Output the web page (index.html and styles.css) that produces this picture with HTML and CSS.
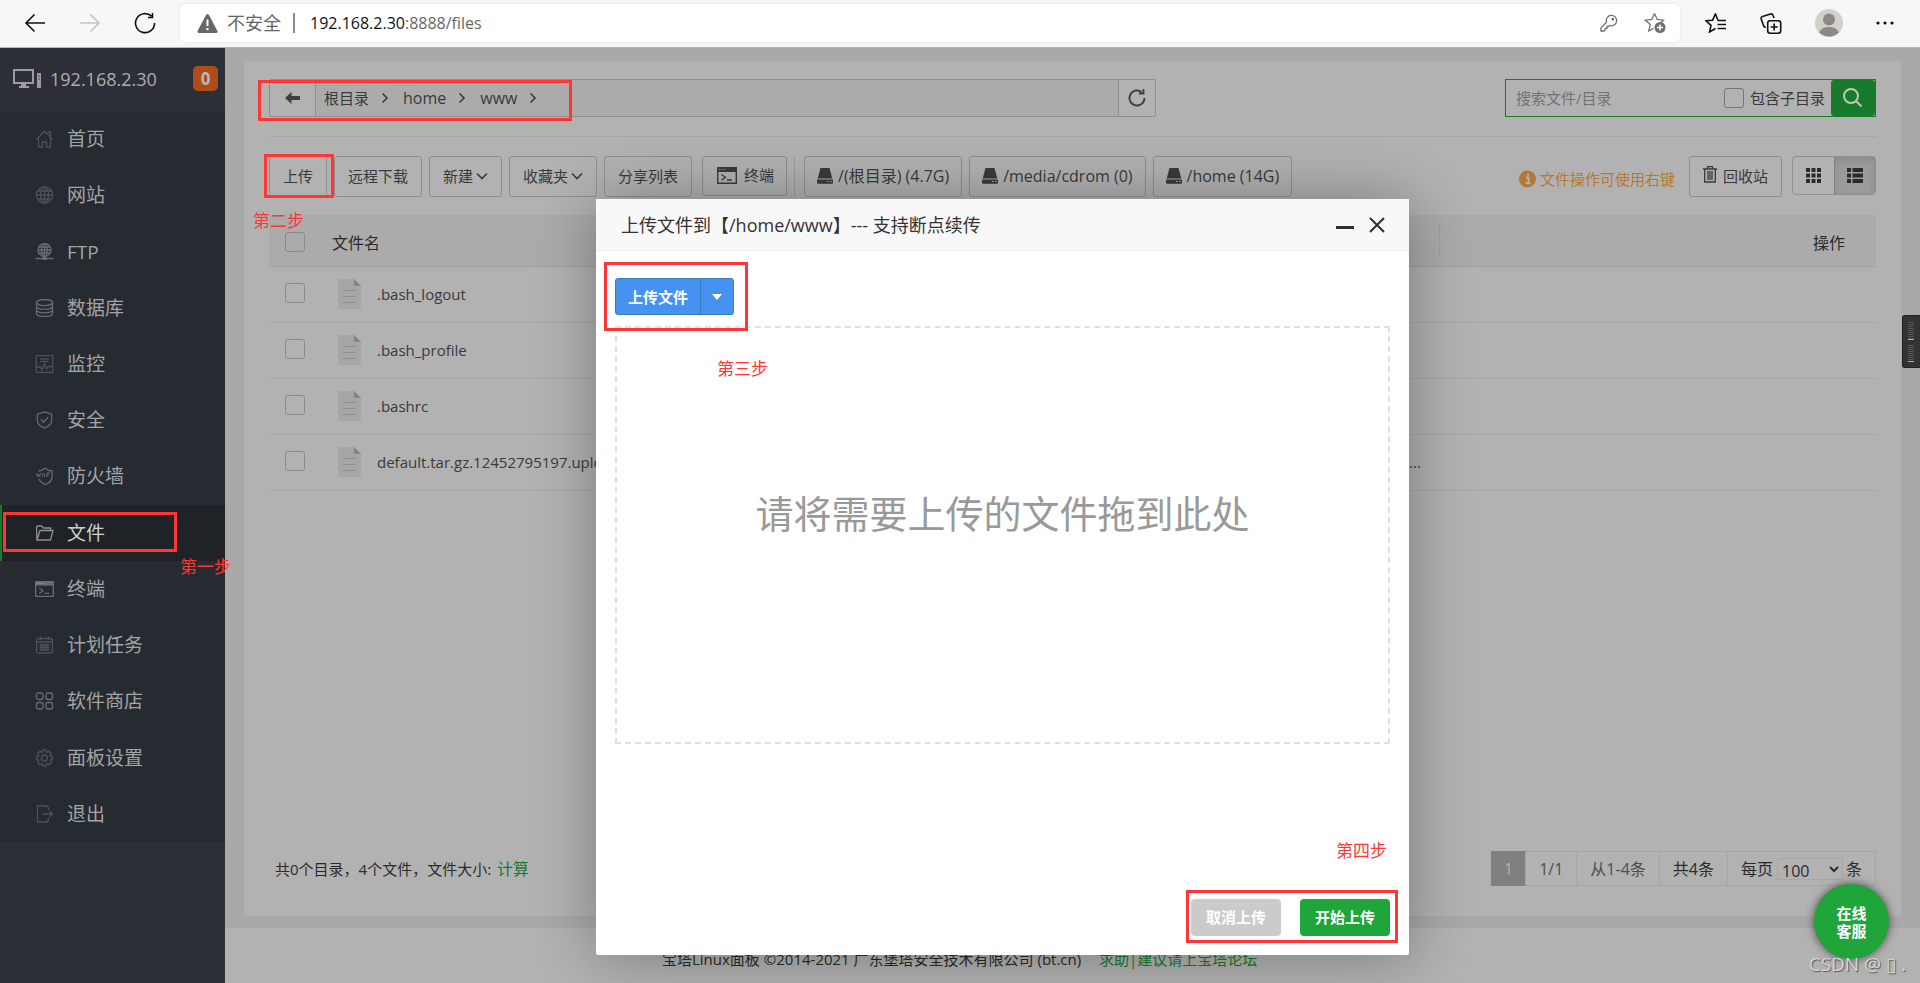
FILE: index.html
```html
<!DOCTYPE html>
<html lang="zh-CN">
<head>
<meta charset="utf-8">
<title>文件 - 宝塔Linux面板</title>
<link rel="stylesheet" href="styles.css">
</head>
<body>
<svg class="sprite" aria-hidden="true">
  <symbol id="chev" viewBox="0 0 12 12"><path d="M1 3.500 6 8.500 11 3.500" fill="none" stroke="currentColor" stroke-width="1.600"/></symbol>
  <symbol id="sep" viewBox="0 0 8 12"><path d="M1.500 1.500 6 6 1.500 10.500" fill="none" stroke="currentColor" stroke-width="1.600"/></symbol>
  <symbol id="disk" viewBox="0 0 16 16"><path d="M3.500 0h9l2.800 10.500H.7z"/><path d="M0 11.500h16v3a1.200 1.200 0 0 1-1.200 1.200H1.200A1.200 1.200 0 0 1 0 14.500z"/><path d="M10 13.500h1.600M13 13.500h1.600" stroke="#b2b2b2" stroke-width="1.200"/></symbol>
  <symbol id="file" viewBox="0 0 23 30"><path d="M1 0h15l7 7v22a1 1 0 0 1-1 1H1a1 1 0 0 1-1-1V1a1 1 0 0 1 1-1z" fill="#a6a6a6"/><path d="M16 0l7 7h-7z" fill="#858585"/><path d="M5 11.500h13M5 17.500h13M5 23.500h13" stroke="#8e8e8e"/></symbol>
  <symbol id="term" viewBox="0 0 20 17"><path d="M.7.7h18.600v15.600H.7z" fill="none" stroke="currentColor" stroke-width="1.400"/><path d="M0 0h20v5H0z" fill="currentColor"/><path d="M2 2.500h1.200M4.500 2.500h1.200M7 2.500h1.200" stroke="#999"/><path d="M4.500 7.500l4 2.800-4 2.800M10 13h5" fill="none" stroke="currentColor" stroke-width="1.300"/></symbol>
</svg>

<header class="browser">
  <div class="nav">
    <button aria-label="后退"><svg width="22" height="20" viewBox="0 0 22 20"><path d="M21 10H2M10.500 1.500 2 10l8.500 8.500"/></svg></button>
    <button aria-label="前进" class="off"><svg width="22" height="20" viewBox="0 0 22 20"><path d="M1 10h19M11.500 1.500 20 10l-8.500 8.500"/></svg></button>
    <button aria-label="刷新"><svg width="22" height="22" viewBox="0 0 22 22"><path d="M20.500 11A9.500 9.500 0 1 1 17.500 4.200M18.500 1v4.500H14"/></svg></button>
  </div>
  <div class="address">
    <svg width="21" height="19" viewBox="0 0 21 19"><path d="M9.200.8a1.500 1.500 0 0 1 2.600 0l8.500 16A1.400 1.400 0 0 1 19 19H2A1.400 1.400 0 0 1 .7 16.800z" fill="#666"/><path d="M10.500 5.500v6.500M10.500 14v2.200" stroke="#fff" stroke-width="2"/></svg>
    <span class="insecure">不安全</span>
    <i class="bar"></i>
    <span class="url"><b>192.168.2.30</b>:8888/files</span>
    <svg class="key" width="18" height="18" viewBox="0 0 18 18"><path d="M6.500 8.200a5.200 5.200 0 1 1 3.300 3.300L8.500 12.500H7v1.800H5.200v1.500L4 17H1v-3z"/><circle cx="12.800" cy="5.200" r=".8"/></svg>
    <svg class="key" width="22" height="22" viewBox="0 0 22 22"><path d="M10.500 1.500l2.700 6 6.300.7-4 3.600M10.500 1.500l-2.700 6-6.500.7 4.900 4.400-1.400 6.300 4.700-2.700"/><circle cx="16" cy="15.500" r="5.500" fill="#6f6f6f" stroke="none"/><path d="M16 12.500v6M13 15.500h6" stroke="#fff" stroke-width="1.500"/></svg>
  </div>
  <div class="tools">
    <button aria-label="收藏夹"><svg width="22" height="20" viewBox="0 0 22 20"><path d="M13 7.200 10.400 1 7.600 7.200 1 7.800l5 4.500L4.500 19l6-3.500M12.500 7.500H21M12.500 11.500H21M12.500 15.500H21"/></svg></button>
    <button aria-label="集锦"><svg width="22" height="21" viewBox="0 0 22 21"><rect x="7.700" y="7.700" width="13" height="12.500" rx="2.500"/><path d="M14.200 10.500v7M10.700 14h7M14 5l-1-2.700A2 2 0 0 0 10.500 1L2.500 3.500A2 2 0 0 0 1.200 6l2.500 7a3 3 0 0 0 2 1.500"/></svg></button>
    <button aria-label="个人"><svg width="28" height="28" viewBox="0 0 28 28"><circle cx="14" cy="14" r="14" fill="#d3d0cc" stroke="none"/><circle cx="14" cy="10.500" r="6" fill="#8d8884" stroke="none"/><path d="M4.200 23.500c2-4.500 6-5.500 9.800-5.500s7.800 1 9.800 5.500A14 14 0 0 1 14 27.500a14 14 0 0 1-9.800-4z" fill="#8d8884" stroke="none"/></svg></button>
    <button aria-label="更多"><svg width="18" height="4" viewBox="0 0 18 4"><g fill="#111" stroke="none"><circle cx="2" cy="2" r="1.600"/><circle cx="9" cy="2" r="1.600"/><circle cx="16" cy="2" r="1.600"/></g></svg></button>
  </div>
</header>

<div class="app">
  <aside class="sidebar">
    <div class="host">
      <svg width="29" height="20" viewBox="0 0 29 20"><path d="M1 1h19v13H1z" fill="none" stroke="#9b9c9e" stroke-width="2"/><path d="M8 15h5v2h3v2H6v-2h2z" fill="#9b9c9e"/><path d="M24 4h4v15h-4z" fill="#9b9c9e"/><path d="M25 7h2M25 10h2" stroke="#555"/></svg>
      <span>192.168.2.30</span>
      <em>0</em>
    </div>
    <nav class="menu">
      <a href="#"><svg viewBox="0 0 18 18"><path d="M.7 9.500 9 1.200l8.300 8.300M3 8v9h4v-5h4v5h4V8M12 2h3v4"/></svg>首页</a>
      <a href="#"><svg viewBox="0 0 18 18"><circle cx="9" cy="9" r="8.200"/><ellipse cx="9" cy="9" rx="4" ry="8.200"/><path d="M9 1v16M1 9h16M2.200 5h13.600M2.200 13h13.600"/></svg>网站</a>
      <a href="#" class="lit"><svg viewBox="0 0 18 18"><circle cx="9" cy="7" r="6.500"/><ellipse cx="9" cy="7" rx="3" ry="6.500"/><path d="M9 0v16M2.500 7h13M3.500 4h11M3.500 10h11M0 15.500h18" /><path d="M7 15.500h4" stroke-width="3"/></svg>FTP</a>
      <a href="#" class="lit"><svg viewBox="0 0 18 18"><ellipse cx="9" cy="3.600" rx="8" ry="3"/><path d="M1 3.600v10.800c0 4 16 4 16 0V3.600M1 7.200c0 4 16 4 16 0M1 10.800c0 4 16 4 16 0"/></svg>数据库</a>
      <a href="#"><svg viewBox="0 0 18 18"><path d="M.7.7h16.600v16.600H.7zM5 4h8M5 6.500h8M1 12h4l1.500 3L9 9l2 5 1.500-2.500H17"/></svg>监控</a>
      <a href="#" class="lit"><svg viewBox="0 0 18 20"><path d="M9 1 17 3.500V10c0 5-4 7.500-8 9-4-1.500-8-4-8-9V3.500zM5 9l3 3.500L13 7"/></svg>安全</a>
      <a href="#" class="lit"><svg viewBox="0 0 18 18"><path d="M3 4c2.500 0 4-.8 6.500-2.800C12 3.200 13.500 4 16.500 4v6c0 3.500-3 6-6.500 7.500-3-1.200-5.500-3-6.500-5.500"/><path d="M1 6l1 4 1-3 1 3 1-4M6.500 10 8 6l1.500 4M11.500 10V6h3M11.500 8h2" stroke-width="1"/></svg>防火墙</a>
      <a href="#" class="on"><svg viewBox="0 0 18 18"><path d="M1.500 16 1 3.500A1.500 1.500 0 0 1 2.500 2H6l2 2h7v2.500M1.500 16 4.500 6.500h13L15 16z"/></svg>文件</a>
      <a href="#" class="lit"><svg viewBox="0 0 20 17"><use href="#term"/></svg>终端</a>
      <a href="#"><svg viewBox="0 0 18 18"><rect x="1" y="2.500" width="16" height="14.500" rx="2"/><path d="M1 6h16M5 .5v4M13 .5v4M4 9h10M4 11.500h10M4 14h10M6 8v7M9 8v7M12 8v7"/></svg>计划任务</a>
      <a href="#" class="lit"><svg viewBox="0 0 18 18"><rect x="1" y="1" width="6.500" height="6.500" rx="2"/><rect x="10.500" y="1" width="6.500" height="6.500" rx="2"/><rect x="1" y="10.500" width="6.500" height="6.500" rx="2"/><rect x="10.500" y="10.500" width="6.500" height="6.500" rx="2"/></svg>软件商店</a>
      <a href="#"><svg viewBox="0 0 18 18"><path d="M7.500 1h3l.6 2.300 2.400-1 2.200 2.200-1 2.400 2.300.6v3l-2.300.6 1 2.400-2.200 2.200-2.400-1-.6 2.300h-3l-.6-2.300-2.400 1-2.200-2.200 1-2.400L1 10.500v-3l2.300-.6-1-2.400 2.200-2.200 2.400 1z"/><circle cx="9" cy="9" r="3"/></svg>面板设置</a>
      <a href="#"><svg viewBox="0 0 18 18"><path d="M13 5V3l-1.500-2H2v16h9.500l1.500-2v-2M7 9h10M14 6l3 3-3 3"/></svg>退出</a>
    </nav>
  </aside>

  <div class="content">
    <main class="panel">
      <div class="top">
        <div class="path">
          <button class="back" aria-label="返回上级"><svg width="15" height="12" viewBox="0 0 15 12"><path d="M0 6 6.500 0v4H15v4H6.500v4z"/></svg></button>
          <div class="crumbs"><a href="#">根目录</a><svg><use href="#sep"/></svg><a href="#" class="en">home</a><svg><use href="#sep"/></svg><a href="#" class="en">www</a><svg><use href="#sep"/></svg></div>
          <button class="refresh" aria-label="刷新目录"><svg width="18" height="18" viewBox="0 0 18 18"><path d="M16.500 9A7.500 7.500 0 1 1 13.500 3M11 4.500h4.500V0" fill="none" stroke="currentColor" stroke-width="1.800"/></svg></button>
        </div>
        <form class="search">
          <input type="text" placeholder="搜索文件/目录" aria-label="搜索文件/目录">
          <input type="checkbox" id="sub"><label for="sub">包含子目录</label>
          <button type="button" aria-label="搜索"><svg width="20" height="20" viewBox="0 0 20 20"><circle cx="8" cy="8" r="7"/><path d="M13 13l5.500 5.500"/></svg></button>
        </form>
      </div>

      <div class="bar-row">
        <button class="btn">上传</button>
        <button class="btn">远程下载</button>
        <button class="btn">新建<svg class="down"><use href="#chev"/></svg></button>
        <button class="btn">收藏夹<svg class="down"><use href="#chev"/></svg></button>
        <button class="btn">分享列表</button>
        <button class="btn wide"><svg width="20" height="17"><use href="#term"/></svg>终端</button>
        <i class="rule"></i>
        <button class="btn disk"><svg><use href="#disk"/></svg>/(根目录) (4.7G)</button>
        <button class="btn disk"><svg><use href="#disk"/></svg>/media/cdrom (0)</button>
        <button class="btn disk"><svg><use href="#disk"/></svg>/home (14G)</button>
        <span class="tip"><svg width="17" height="18" viewBox="0 0 17 18"><circle cx="8.500" cy="9" r="8.500" fill="#b27a30"/><path d="M7 7.500h2.500V13M6.500 13.200h5M9 3.500v2.200" fill="none" stroke="#b2b2b2" stroke-width="2"/></svg>文件操作可使用右键</span>
        <button class="btn bin"><svg width="14" height="17" viewBox="0 0 14 17"><path d="M0 3h14M4.500 2.500V.7h5v1.800M1.700 3v13h10.600V3M5 5v9M7 5v9M9 5v9" fill="none" stroke="currentColor" stroke-width="1.300"/></svg>回收站</button>
        <div class="toggle">
          <button aria-label="图标视图"><svg width="15" height="15" viewBox="0 0 15 15"><path d="M0 0h4v4H0zM5.500 0h4v4h-4zM11 0h4v4h-4zM0 5.500h4v4H0zM5.500 5.500h4v4h-4zM11 5.500h4v4h-4zM0 11h4v4H0zM5.500 11h4v4h-4zM11 11h4v4h-4z"/></svg></button>
          <button aria-label="列表视图" class="on"><svg width="16" height="15" viewBox="0 0 16 15"><path d="M0 0h4v4H0zM5.500 0H16v4H5.500zM0 5.500h4v4H0zM5.500 5.500H16v4H5.500zM0 11h4v4H0zM5.500 11H16v4H5.500z"/></svg></button>
        </div>
      </div>

      <table class="files">
        <colgroup><col class="c1"><col class="c2"><col class="c3"><col></colgroup>
        <thead><tr><th><input type="checkbox" aria-label="全选"></th><th>文件名</th><th class="edge"></th><th class="act">操作</th></tr></thead>
        <tbody>
          <tr><td><input type="checkbox" aria-label="选择"></td><td><span class="name"><svg><use href="#file"/></svg>.bash_logout</span></td><td></td><td></td></tr>
          <tr><td><input type="checkbox" aria-label="选择"></td><td><span class="name"><svg><use href="#file"/></svg>.bash_profile</span></td><td></td><td></td></tr>
          <tr><td><input type="checkbox" aria-label="选择"></td><td><span class="name"><svg><use href="#file"/></svg>.bashrc</span></td><td></td><td></td></tr>
          <tr><td><input type="checkbox" aria-label="选择"></td><td><span class="name"><svg><use href="#file"/></svg>default.tar.gz.12452795197.upload</span></td><td class="note">续...</td><td></td></tr>
        </tbody>
      </table>

      <div class="summary">
        <span>共0个目录，4个文件，文件大小: <a href="#">计算</a></span>
        <div class="pages">
          <span class="cur">1</span><span>1/1</span><span>从1-4条</span><span class="dark">共4条</span>
          <span class="dark"><label for="per">每页</label><select id="per"><option>100</option></select>条</span>
        </div>
      </div>
    </main>
    <footer class="foot">宝塔Linux面板 ©2014-2021 广东堡塔安全技术有限公司 (bt.cn) <a href="#">求助|建议请上宝塔论坛</a></footer>
  </div>
</div>

<section class="modal" role="dialog" aria-labelledby="mt">
  <header>
    <h2 id="mt">上传文件到【/home/www】--- 支持断点续传</h2>
    <button aria-label="最小化"><svg width="18" height="18" viewBox="0 0 18 18"><path d="M0 11.500h18" stroke-width="3"/></svg></button>
    <button aria-label="关闭"><svg width="16" height="16" viewBox="0 0 16 16"><path d="M1 1l14 14M15 1 1 15" stroke-width="2"/></svg></button>
  </header>
  <div class="split"><button>上传文件</button><button aria-label="更多上传方式"><svg width="10" height="6" viewBox="0 0 10 6"><path d="M0 0h10L5 6z" fill="#fff"/></svg></button></div>
  <div class="drop">请将需要上传的文件拖到此处</div>
  <div class="actions"><button class="cancel">取消上传</button><button class="start">开始上传</button></div>
</section>

<div class="meter">
  <div class="m1"></div>
  <div class="m2"></div>
</div>
<button class="chat">在线<br>客服</button>

<div class="box b1"></div><div class="box b2"></div><div class="box b3"></div><div class="box b4"></div><div class="box b5"></div>
<span class="step s1">第一步</span><span class="step s2">第二步</span><span class="step s3">第三步</span><span class="step s4">第四步</span>
<span class="mark">CSDN @ ▯ .</span>
</body>
</html>
```
FILE: styles.css
```css
* { box-sizing: border-box; }
body {
  margin: 0;
  min-height: 100vh;
  display: flex;
  flex-direction: column;
  position: relative;
  overflow: hidden;
  font: 15px/20px "Open Sans", "Noto Sans CJK SC", sans-serif;
  color: #3a3a3a;
  background: #a9a9a9;
}
button, input, select { font: inherit; color: inherit; margin: 0; }
button { padding: 0; border: 0; background: none; display: inline-flex; align-items: center; justify-content: center; white-space: nowrap; }
a { color: inherit; text-decoration: none; }
svg { flex: none; display: block; }
.sprite { position: absolute; width: 0; height: 0; }

/* browser bar */
.browser { height: 48px; display: flex; align-items: center; background: #f7f7f7; border-bottom: 1px solid #b5b5b5; padding-bottom: 1px; }
.browser button svg { fill: none; stroke: #111; stroke-width: 1.6; }
.nav { display: flex; width: 180px; padding-left: 24px; gap: 33px; }
.nav .off { opacity: .22; }
.address { flex: 1; height: 38px; display: flex; align-items: center; padding: 0 14px 0 17px; background: #fff; border-radius: 5px; box-shadow: 0 0 3px #e0e0e0; font-size: 16px; color: #666; }
.insecure { margin-left: 9px; font-size: 18px; }
.bar { width: 2px; height: 20px; margin: 0 15px 0 12px; background: #8a8a8a; }
.url { flex: 1; }
.url b { font-weight: 400; color: #111; }
.key { fill: none; stroke: #707070; stroke-width: 1.3; margin-left: 26px; }
.tools { display: flex; align-items: center; width: 240px; padding-left: 25px; gap: 33px; }

.app { flex: 1; display: flex; }

/* sidebar */
.sidebar { width: 225px; background: #2c2f38; color: #a2a4a6; }
.host { height: 63px; display: flex; align-items: center; padding: 0 7px 2px 13px; gap: 8px; font-size: 18px; color: #acadae; }
.host span { flex: 1; }
.host em { width: 25px; height: 25px; border-radius: 5px; background: #b04c18; color: #b9b9b9; font: 700 17px/25px "Open Sans", sans-serif; text-align: center; }
.menu { display: grid; grid-auto-rows: 1fr; min-height: 731px; background: #262a31; border-left: 2px solid #2b2c2f; }
.menu a { display: flex; align-items: center; gap: 13px; padding-left: 33px; font-size: 19px; }
.menu svg { width: 19px; height: 18px; fill: none; stroke: #4e5256; stroke-width: 1.3; color: #4e5256; }
.menu .lit svg { stroke: #696c6f; color: #696c6f; }
.menu use { stroke: none; }
.menu .on { margin-left: -2px; border-left: 2px solid #187a2b; background: #1f2226; color: #cfcfcf; }
.menu .on svg { stroke: #8f9193; }

/* content */
.content { flex: 1; display: flex; flex-direction: column; min-width: 0; }
.panel { flex: 1; display: flex; flex-direction: column; margin: 13px 19px 12px; padding: 18px 25px 30px; background: #b2b2b2; }
.top { display: flex; justify-content: space-between; padding-bottom: 19px; border-bottom: 1px solid #a6a6a6; }
.path { display: flex; width: 887px; height: 38px; border: 1px solid #8f8f8f; border-radius: 2px; }
.back { width: 46px; border-right: 1px solid #8f8f8f; }
.back svg { fill: #3d3d3d; }
.refresh { width: 37px; border-left: 1px solid #8f8f8f; }
.crumbs { flex: 1; display: flex; align-items: center; gap: 12px; padding-left: 8px; background: #ababab; }
.crumbs svg { width: 8px; height: 12px; margin-right: 2px; }
.en { font-size: 16px; }
.search { display: flex; align-items: center; width: 371px; height: 38px; border: 1px solid #187a2b; }
.search input[type=text] { flex: 1; min-width: 0; height: 36px; padding: 0 10px; border: 0; background: none; outline: 0; }
.search input::placeholder { color: #727272; opacity: 1; }
.search label { margin: 0 6px; }
.search input[type=checkbox] { border-color: #757575; }
.search button { width: 44px; height: 36px; border-radius: 3px; background: #187a2b; }
.search button svg { fill: none; stroke: #b9c9bc; stroke-width: 2; }
input[type=checkbox] { appearance: none; display: block; width: 20px; height: 20px; border: 1px solid #8a8a8a; border-radius: 3px; }

.bar-row { display: flex; align-items: flex-start; gap: 7px; padding: 19px 0 18px; }
.btn { height: 41px; padding: 0 13px 2px; border: 1px solid #8f8f8f; border-radius: 3px; }
.btn .down { width: 12px; height: 12px; margin-left: 3px; }
.wide { height: 40px; padding: 0 12px 2px 14px; margin-left: 3px; gap: 7px; }
.rule { width: 1px; height: 41px; margin-right: 2px; background: #9c9c9c; }
.disk { gap: 5px; padding: 0 12px 2px; font-size: 16px; }
.disk svg { width: 16px; height: 16px; fill: #3a3a3a; }
.tip { display: flex; align-items: center; gap: 4px; height: 41px; padding-top: 5px; margin-left: auto; color: #b27a30; }
.bin { gap: 6px; margin-left: 7px; }
.bin svg { margin-bottom: 2px; }
.toggle { display: flex; height: 39px; margin-left: 3px; border: 1px solid #8f8f8f; border-radius: 4px; }
.toggle button { width: 41px; }
.toggle svg { fill: #2b2b2b; }
.toggle .on { background: #9b9b9b; border-left: 1px solid #828282; box-shadow: inset 0 3px 6px #8a8a8a; }

.files { width: 100%; table-layout: fixed; border-collapse: collapse; }
.files .c1 { width: 55px; }
.files .c2 { width: 1070px; }
.files .c3 { width: 46px; }
.files th { height: 51px; padding: 6px 8px 0; background: #ababab; border-bottom: 1px solid #a0a0a0; font-weight: 400; font-size: 16px; text-align: left; color: #2b2b2b; }
.files .act { padding-right: 31px; text-align: right; }
.files .edge { background: linear-gradient(#a0a0a0, #a0a0a0) right center / 1px 32px no-repeat #ababab; }
.files td { height: 56px; padding: 0 8px; border-bottom: 1px solid #a6a6a6; }
.files tr > :first-child { padding-left: 16px; padding-bottom: 2px; }
.files .name { display: flex; align-items: center; gap: 16px; padding-left: 6px; }
.files .name svg { width: 23px; height: 30px; }
.files .note { padding: 0; }

.summary { display: flex; justify-content: space-between; align-items: center; margin-top: auto; padding-left: 6px; color: #2b2b2b; }
.summary a { margin-left: 2px; font-size: 16px; color: #187a2b; }
.pages { display: flex; height: 35px; border: 1px solid #a6a6a6; color: #4d4d4d; font-size: 16px; }
.pages > span { display: flex; align-items: center; padding: 0 13px; border-left: 1px solid #a6a6a6; }
.pages .cur { background: #808080; color: #b2b2b2; border: 0; margin: -1px; }
.pages .dark { color: #2b2b2b; }
.pages select { width: 66px; height: 22px; margin: 0 3px 0 4px; padding: 0 0 2px; border: 1px solid #a6a6a6; border-radius: 2px; background: none; line-height: 18px; }
.foot { height: 55px; padding: 21px 0 0 437px; background: #b2b2b2; color: #2b2b2b; white-space: nowrap; }
.foot a { margin-left: 14px; color: #187a2b; }

/* upload dialog */
.modal { position: absolute; left: 596px; top: 199px; width: 813px; padding-bottom: 19px; background: #fff; border-radius: 2px; box-shadow: 1px 1px 62px rgba(0, 0, 0, .32); }
.modal header { display: flex; align-items: center; gap: 15px; height: 52px; padding: 0 24px 0 25px; background: #f8f8f8; border-bottom: 1px solid #eee; }
.modal h2 { flex: 1; margin: 0; font-size: 18px; font-weight: 400; color: #333; }
.modal header svg { fill: none; stroke: #2e2d3c; }
.split { display: flex; width: max-content; margin: 27px 0 11px 19px; border: 1px solid #357ebd; border-radius: 3px; background: #4592f0; color: #fff; }
.split button { height: 35px; padding: 0 12px; font-weight: 600; }
.split button + button { padding: 0 11px; border-left: 1px solid #357ebd; }
.drop { display: flex; align-items: center; justify-content: center; height: 418px; margin: 0 19px; padding-bottom: 44px; border: 2px dashed #e0e0e0; font-size: 38px; line-height: 50px; color: #999; }
.actions { display: flex; justify-content: flex-end; gap: 19px; margin: 155px 19px 0; }
.actions button { width: 90px; height: 37px; padding-bottom: 2px; border-radius: 4px; font-weight: 700; color: #fff; }
.cancel { background: #cbcbcb; }
.start { background: #20a53a; }

/* floating widgets */
.meter { position: absolute; right: 0; top: 315px; width: 18px; height: 53px; padding: 6px 6px 5px 5px; border: 1px solid #222; border-right: 0; border-radius: 3px 0 0 3px; background: #333; display: grid; gap: 5px; }
.meter div { border-bottom: 1px solid #f5a623; background: repeating-linear-gradient(#555 0 1px, transparent 1px 2px) padding-box; }
.meter .m2 { border-color: #7ddc1f; }
.chat { position: absolute; right: 31px; top: 884px; width: 75px; height: 75px; border-radius: 50%; background: #20a53a; color: #fff; font-weight: 600; line-height: 18px; box-shadow: 0 0 10px rgba(0, 0, 0, .6); }
.mark { position: absolute; right: 14px; top: 952px; font-size: 19px; line-height: 24px; color: #d6d6d6; text-shadow: 1px 1px 1px #555; }

/* tutorial marks */
.box { position: absolute; border: 3px solid #ff3636; pointer-events: none; }
.b1 { left: 258px; top: 80px; width: 314px; height: 41px; }
.b2 { left: 264px; top: 154px; width: 70px; height: 44px; }
.b3 { left: 3px; top: 512px; width: 174px; height: 40px; }
.b4 { left: 604px; top: 262px; width: 144px; height: 69px; }
.b5 { left: 1186px; top: 890px; width: 212px; height: 53px; }
.step { position: absolute; font-size: 17px; line-height: 24px; color: #ff3636; }
.s1 { left: 180px; top: 555px; }
.s2 { left: 253px; top: 209px; }
.s3 { left: 717px; top: 357px; }
.s4 { left: 1336px; top: 839px; }
```
